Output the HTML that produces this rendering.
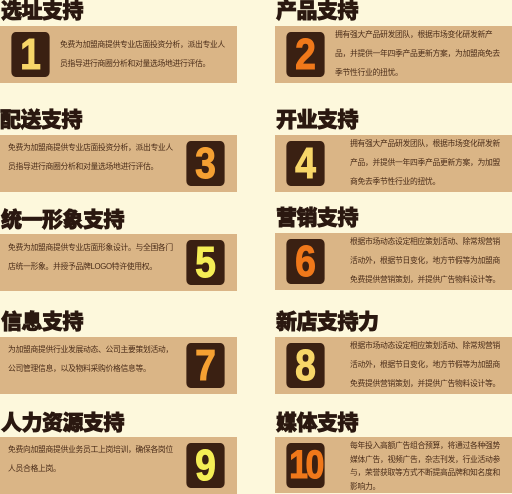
<!DOCTYPE html><html><head><meta charset="utf-8"><style>
body{margin:0;width:512px;height:493px;background:#fdf8dc;position:relative;overflow:hidden;font-family:"Liberation Sans","Noto Sans CJK SC",sans-serif}
.t{position:absolute;font-weight:900;font-size:21px;color:#2a1810;letter-spacing:-0.5px;line-height:22px;-webkit-text-stroke:0.8px #2a1810}
.b{position:absolute;background:#dab586;height:57px}
.n{position:absolute;top:6px;width:45px;height:45px;background:#3a2012;border-radius:5px;font-family:"Liberation Sans Narrow","Liberation Sans",sans-serif;font-weight:bold;font-size:44px;line-height:45px;text-align:center;transform:scaleX(0.85);-webkit-text-stroke:1px currentColor}
.p{position:absolute;font-size:7.8px;letter-spacing:-0.3px;color:#4a2c18;line-height:19px;white-space:nowrap}
.y{color:#f7d668}.o{color:#f0781a}.a{color:#f5a032}.g{color:#f5ee55}
</style></head><body>
<div class="t" style="left:1px;top:1px">选址支持</div>
<div class="b" style="left:0;top:26px;width:237px"><div class="n y" style="left:8px">1</div><div class="p" style="left:60px;top:9px">免费为加盟商提供专业店面投资分析，派出专业人<br>员指导进行商圈分析和对量选场地进行评估。</div></div>
<div class="t" style="left:0;top:110px">配送支持</div>
<div class="b" style="left:0;top:135px;width:237px"><div class="p" style="left:8px;top:3px">免费为加盟商提供专业店面投资分析，派出专业人<br>员指导进行商圈分析和对量选场地进行评估。</div><div class="n a" style="left:183px">3</div></div>
<div class="t" style="left:1px;top:210px">统一形象支持</div>
<div class="b" style="left:0;top:234px;width:237px"><div class="p" style="left:8px;top:4px">免费为加盟商提供专业店面形象设计。与全国各门<br>店统一形象。并授予品牌LOGO特许使用权。</div><div class="n g" style="left:183px">5</div></div>
<div class="t" style="left:1px;top:312px">信息支持</div>
<div class="b" style="left:0;top:337px;width:237px"><div class="p" style="left:8px;top:3px">为加盟商提供行业发展动态、公司主要策划活动，<br>公司管理信息，以及物料采购价格信息等。</div><div class="n a" style="left:183px">7</div></div>
<div class="t" style="left:1px;top:413px">人力资源支持</div>
<div class="b" style="left:0;top:437px;width:237px"><div class="p" style="left:8px;top:3px">免费向加盟商提供业务员工上岗培训，确保各岗位<br>人员合格上岗。</div><div class="n g" style="left:183px">9</div></div>

<div class="t" style="left:276px;top:1px">产品支持</div>
<div class="b" style="left:275px;top:26px;width:237px"><div class="n o" style="left:8px">2</div><div class="p" style="left:60px;top:-1px">拥有强大产品研发团队，根据市场变化研发新产<br>品，并提供一年四季产品更新方案，为加盟商免去<br>季节性行业的扭忧。</div></div>
<div class="t" style="left:276px;top:110px">开业支持</div>
<div class="b" style="left:275px;top:135px;width:237px"><div class="n y" style="left:8px">4</div><div class="p" style="left:75px;top:-1px">拥有强大产品研发团队，根据市场变化研发新<br>产品，并提供一年四季产品更新方案，为加盟<br>商免去季节性行业的扭忧。</div></div>
<div class="t" style="left:276px;top:208px">营销支持</div>
<div class="b" style="left:275px;top:233px;width:237px"><div class="n o" style="left:8px">6</div><div class="p" style="left:75px;top:-1px">根据市场动态设定相应策划活动、除常规营销<br>活动外，根据节日变化，地方节假等为加盟商<br>免费提供营销策划，并提供广告物料设计等。</div></div>
<div class="t" style="left:276px;top:312px">新店支持力</div>
<div class="b" style="left:275px;top:337px;width:237px"><div class="n y" style="left:8px">8</div><div class="p" style="left:75px;top:-1px">根据市场动态设定相应策划活动、除常规营销<br>活动外，根据节日变化，地方节假等为加盟商<br>免费提供营销策划，并提供广告物料设计等。</div></div>
<div class="t" style="left:276px;top:413px">媒体支持</div>
<div class="b" style="left:275px;top:437px;width:237px;height:56px"><div class="n o" style="left:8px;font-size:40px;letter-spacing:-3px">10</div><div class="p" style="left:75px;top:2px;line-height:13.5px">每年投入高额广告组合预算，将通过各种强势<br>媒体广告，视频广告，杂志刊发，行业活动参<br>与，荣誉获取等方式不断提高品牌和知名度和<br>影响力。</div></div>
</body></html>
